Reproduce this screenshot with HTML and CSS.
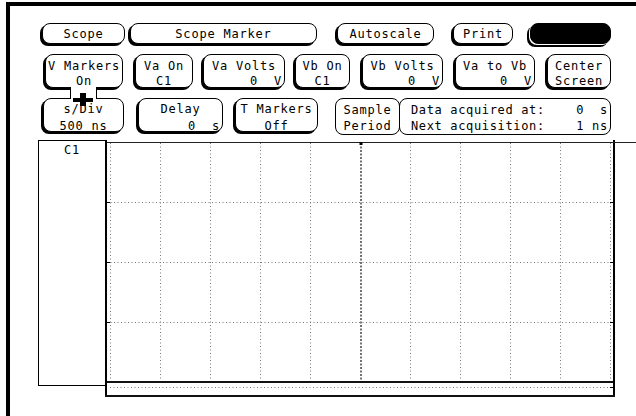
FILE: index.html
```html
<!DOCTYPE html>
<html lang="en">

<head>
    <meta charset="UTF-8">
    <title>Scope Marker</title>
    <link rel="stylesheet" href="styles.css">
</head>

<body>
    <div class="screen">
        <div class="row row1">
            <div class="btn w-scope">Scope</div>
            <div class="btn w-marker">Scope Marker</div>
            <div class="btn w-auto">Autoscale</div>
            <div class="btn w-print">Print</div>
            <div class="btn btn-black w-blank"></div>
        </div>

        <div class="row row2">
            <div class="btn w-vmark"><div>V Markers</div><div>On</div></div>
            <div class="btn w-vaon"><div>Va On</div><div>C1</div></div>
            <div class="btn w-vavolts"><div>Va Volts</div><div class="val">0  V</div></div>
            <div class="btn w-vbon"><div>Vb On</div><div>C1</div></div>
            <div class="btn w-vbvolts"><div>Vb Volts</div><div class="val">0  V</div></div>
            <div class="btn w-vatovb"><div>Va to Vb</div><div class="val">0  V</div></div>
            <div class="btn w-center"><div>Center</div><div>Screen</div></div>
        </div>

        <div class="row row3">
            <div class="btn w-sdiv"><div>s/Div</div><div>500 ns</div></div>
            <div class="btn w-delay"><div>Delay</div><div class="val">0  s</div></div>
            <div class="btn w-tmark"><div>T Markers</div><div>Off</div></div>
            <div class="btn plain w-sample"><div>Sample</div><div>Period</div></div>
            <div class="btn plain data">
                <div class="dline">Data acquired at:    0  s</div>
                <div class="dline">Next acquisition:    1 ns</div>
            </div>
        </div>

        <div class="display">
            <div class="label">C1</div>
            <svg class="grid" width="531" height="258" viewBox="0 0 531 258">
                <rect x="0" y="0" width="2" height="257" fill="#000" />
                <rect x="508" y="0" width="2" height="257" fill="#000" />
                <line x1="2" y1="2.5" x2="531" y2="2.5" stroke="#222" />
                <rect x="2" y="241" width="506" height="2" fill="#111" />
                <rect x="0" y="255" width="510" height="2" fill="#111" />

                <g stroke="#777" stroke-dasharray="1 2.5">
                    <line x1="5.5" y1="3" x2="5.5" y2="240" />
                    <line x1="55.5" y1="3" x2="55.5" y2="240" />
                    <line x1="105.5" y1="3" x2="105.5" y2="240" />
                    <line x1="155.5" y1="3" x2="155.5" y2="240" />
                    <line x1="205.5" y1="3" x2="205.5" y2="240" />
                    <line x1="305.5" y1="3" x2="305.5" y2="240" />
                    <line x1="355.5" y1="3" x2="355.5" y2="240" />
                    <line x1="405.5" y1="3" x2="405.5" y2="240" />
                    <line x1="455.5" y1="3" x2="455.5" y2="240" />
                    <line x1="505.5" y1="3" x2="505.5" y2="240" />
                    <line x1="2" y1="62.5" x2="508" y2="62.5" />
                    <line x1="2" y1="122.5" x2="508" y2="122.5" />
                    <line x1="2" y1="182.5" x2="508" y2="182.5" />
                    <line x1="5" y1="247.5" x2="506" y2="247.5" />
                </g>
                <line x1="256" y1="3" x2="256" y2="240" stroke="#444" stroke-width="1.5" stroke-dasharray="2 1.5" />
                <rect x="254.5" y="2" width="3" height="3" fill="#000" />

                <g fill="#000">
                    <rect x="2" y="62" width="3" height="1" />
                    <rect x="2" y="122" width="3" height="1" />
                    <rect x="2" y="182" width="3" height="1" />
                    <rect x="505" y="62" width="3" height="1" />
                    <rect x="505" y="122" width="3" height="1" />
                    <rect x="505" y="182" width="3" height="1" />
                    <rect x="505" y="247" width="3" height="1" />
                </g>
            </svg>
        </div>

        <!-- cursor tab joining V Markers and s/Div -->
        <svg class="cursor" width="28" height="24" viewBox="0 0 28 24">
            <rect x="1" y="1" width="25" height="12" fill="#fff" />
            <line x1="0.5" y1="1" x2="0.5" y2="13" stroke="#000" />
            <line x1="26.5" y1="1" x2="26.5" y2="13" stroke="#000" />
            <rect x="3" y="12" width="20" height="4" fill="#000" />
            <rect x="10" y="7" width="6" height="13" fill="#000" />
        </svg>
    </div>
</body>

</html>
```

FILE: styles.css
```css
body {
    margin: 0;
    background: #fff;
    color: #000;
    font-family: "DejaVu Sans Mono", monospace;
    font-size: 12px;
    overflow: hidden;
}

.screen {
    position: relative;
    margin: 2px 0 0 6px;
    height: 414px;
    border-top: 4px solid #000;
    border-left: 4px solid #000;
    box-sizing: border-box;
}

.row {
    display: flex;
    align-items: flex-start;
}

.row1 {
    padding: 17px 0 0 32px;
}

.row2 {
    padding: 10px 0 0 35px;
}

.row3 {
    padding: 10px 0 0 33px;
}

.btn {
    box-sizing: border-box;
    border: 1px solid #000;
    border-radius: 8px;
    box-shadow: -2px 2px 0 #000;
    background: #fff;
    letter-spacing: 0.8px;
    text-align: center;
}

.btn .val {
    text-align: right;
    padding-right: 2px;
    white-space: pre;
}

.row1 .btn {
    height: 21px;
    line-height: 18px;
    padding-top: 1px;
}

.row2 .btn {
    height: 34px;
    line-height: 15px;
    padding-top: 4px;
}

.row3 .btn {
    height: 34px;
    line-height: 17px;
    padding-top: 2px;
}

.btn-black {
    background: #000;
    box-shadow: -1px 1px 0 #fff, -3px 3px 0 #000;
}

.row3 .plain {
    box-shadow: none;
    height: 37px;
    line-height: 16px;
    padding-top: 3px;
}

/* row 1 */
.w-scope { width: 83px; }
.w-marker { width: 187px; margin-left: 5px; }
.w-auto { width: 97px; margin-left: 20px; }
.w-print { width: 60px; margin-left: 19px; }
.w-blank { width: 81px; margin-left: 17px; }

/* row 2 */
.w-vmark { width: 78px; }
.w-vaon { width: 58px; margin-left: 12px; }
.w-vavolts { width: 82px; margin-left: 10px; }
.w-vbon { width: 55px; margin-left: 10px; }
.w-vbvolts { width: 81px; margin-left: 12px; }
.w-vatovb { width: 80px; margin-left: 12px; }
.w-center { width: 64px; margin-left: 12px; }

/* row 3 */
.w-sdiv { width: 81px; }
.w-delay { width: 85px; margin-left: 14px; }
.w-tmark { width: 83px; margin-left: 12px; }
.w-sample { width: 65px; margin-left: 17px; }

.row3 .data {
    width: 212px;
    margin-left: -1px;
    padding-left: 11px;
    letter-spacing: 0.65px;
    text-align: left;
}

.dline {
    white-space: pre;
}

.display {
    display: flex;
    align-items: flex-start;
    padding: 5px 0 0 28px;
}

.label {
    box-sizing: border-box;
    width: 67px;
    height: 246px;
    border: 1px solid #000;
    border-right: none;
    text-align: center;
    line-height: 15px;
    padding-top: 2px;
    letter-spacing: 0.8px;
}

.grid {
    display: block;
}

.cursor {
    position: absolute;
    left: 60px;
    top: 80px;
}
```
